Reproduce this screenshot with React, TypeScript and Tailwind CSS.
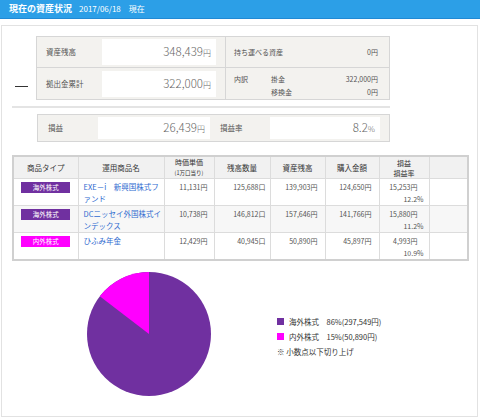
const jp = "font-['Noto_Sans_CJK_JP','Noto_Sans',sans-serif]";

type Row = {
  type: string;
  badge: string;
  name: string;
  price: string;
  qty: string;
  balance: string;
  cost: string;
  profit: string;
  rate: string;
  shade?: boolean;
};

const rows: Row[] = [
  {
    type: "海外株式",
    badge: "bg-[#7030a0]",
    name: "EXE－i　新興国株式ファンド",
    price: "11,131円",
    qty: "125,688口",
    balance: "139,903円",
    cost: "124,650円",
    profit: "15,253円",
    rate: "12.2%",
  },
  {
    type: "海外株式",
    badge: "bg-[#7030a0]",
    name: "DCニッセイ外国株式インデックス",
    price: "10,738円",
    qty: "146,812口",
    balance: "157,646円",
    cost: "141,766円",
    profit: "15,880円",
    rate: "11.2%",
    shade: true,
  },
  {
    type: "内外株式",
    badge: "bg-[#ff00ff]",
    name: "ひふみ年金",
    price: "12,429円",
    qty: "40,945口",
    balance: "50,890円",
    cost: "45,897円",
    profit: "4,993円",
    rate: "10.9%",
  },
];

const Yen = ({ value }: { value: string }) => (
  <span>
    {value}
    <span className="text-[8px]">円</span>
  </span>
);

const PieChart = () => (
  <svg width="124" height="124" viewBox="0 0 124 124">
    <circle cx="62" cy="62" r="62" fill="#7030a0" />
    <path d="M62 62 L62 0 A62 62 0 0 0 12.75 24.34 Z" fill="#ff00ff" />
  </svg>
);

const App = () => {
  return (
    <div className={`h-[419px] w-[480px] overflow-hidden bg-white ${jp}`}>
      <div className="flex h-[19px] items-center gap-[7px] border-b border-[#2189d4] bg-[#2c9fe7] pl-[9px] text-white">
        <span className="text-[9px] font-bold">現在の資産状況</span>
        <span className="text-[8px]">2017/06/18　現在</span>
      </div>

      <div className="ml-[1px] mt-[6px] h-[392px] w-[477px] border border-[#e2e2e2] pl-[10px] pt-[10px]">
        {/* summary */}
        <div className="flex">
          <div className="flex w-[24px] flex-col">
            <div className="h-[50px]" />
            <div className="ml-[3px] h-[1px] w-[13px] bg-[#333]" />
          </div>
          <div className="w-[354px] border border-[#d6d6d6] bg-[#f3f2ef] text-[#555]">
            <div className="flex h-[31px] border-b border-[#d6d6d6]">
              <div className="flex w-[189px] items-center border-r border-[#d6d6d6]">
                <span className="w-[65px] pl-[9px] text-[7.5px]">資産残高</span>
                <div className="flex h-[26px] w-[114px] items-center justify-end bg-white pr-[5px] text-[11.5px] font-light text-[#666]">
                  <Yen value="348,439" />
                </div>
              </div>
              <div className="flex flex-1 items-center justify-between pl-[8px] pr-[11px] text-[7px]">
                <span>持ち運べる資産</span>
                <span>0円</span>
              </div>
            </div>
            <div className="flex h-[31px]">
              <div className="flex w-[189px] items-center border-r border-[#d6d6d6]">
                <span className="w-[65px] pl-[9px] text-[7.5px]">拠出金累計</span>
                <div className="flex h-[26px] w-[114px] items-center justify-end bg-white pr-[5px] text-[11.5px] font-light text-[#666]">
                  <Yen value="322,000" />
                </div>
              </div>
              <div className="flex flex-1 pl-[8px] pr-[11px] pt-[5px] text-[7px] leading-[13px]">
                <span className="w-[37px]">内訳</span>
                <div className="flex flex-1 flex-col">
                  <div className="flex justify-between">
                    <span>掛金</span>
                    <span>322,000円</span>
                  </div>
                  <div className="flex justify-between">
                    <span>移換金</span>
                    <span>0円</span>
                  </div>
                </div>
              </div>
            </div>
          </div>
        </div>

        <div className="mt-[6px] h-[2px] w-[378px] bg-[#e4e4e4]" />

        {/* profit */}
        <div className="ml-[25px] mt-[6px] flex h-[28px] w-[353px] items-center border border-[#d6d6d6] bg-[#f3f2ef] text-[#555]">
          <span className="w-[60px] pl-[10px] text-[7.5px]">損益</span>
          <div className="flex h-[22px] w-[112px] items-center justify-end bg-white pr-[5px] text-[11.5px] font-light text-[#666]">
            <Yen value="26,439" />
          </div>
          <span className="ml-[10px] w-[50px] text-[7.5px]">損益率</span>
          <div className="flex h-[22px] w-[110px] items-center justify-end bg-white pr-[5px] text-[11.5px] font-light text-[#666]">
            <span>
              8.2<span className="text-[8px]">%</span>
            </span>
          </div>
        </div>

        {/* products */}
        <table className="mt-[13px] w-[455px] table-fixed border-collapse border-2 border-[#d0d0d0] text-[7px] text-[#555]">
          <colgroup>
            <col className="w-[65px]" />
            <col className="w-[86px]" />
            <col className="w-[50px]" />
            <col className="w-[56px]" />
            <col className="w-[55px]" />
            <col className="w-[54px]" />
            <col className="w-[50px]" />
            <col className="w-[39px]" />
          </colgroup>
          <thead>
            <tr className="h-[22px] bg-[#f1f1f1] text-[7.5px] text-[#333]">
              <th className="border border-[#dcdcdc] p-0 font-normal">商品タイプ</th>
              <th className="border border-[#dcdcdc] p-0 font-normal">運用商品名</th>
              <th className="border border-[#dcdcdc] p-0 text-[7px] font-normal leading-[10px]">
                時価単価
                <br />
                <span className="text-[5.5px]">(1万口当り)</span>
              </th>
              <th className="border border-[#dcdcdc] p-0 font-normal">残高数量</th>
              <th className="border border-[#dcdcdc] p-0 font-normal">資産残高</th>
              <th className="border border-[#dcdcdc] p-0 font-normal">購入金額</th>
              <th className="border border-[#dcdcdc] p-0 text-[7px] font-normal leading-[10px]">
                損益
                <br />
                損益率
              </th>
              <th className="border border-[#dcdcdc] p-0" />
            </tr>
          </thead>
          <tbody>
            {rows.map((row, i) => (
              <tr
                key={row.name}
                className={`${i === 2 ? "h-[27px]" : "h-[26px]"} ${row.shade ? "bg-[#f7f7f7]" : "bg-white"}`}
              >
                <td className="border border-[#dcdcdc] p-0 pt-[3px] align-top">
                  <div
                    className={`mx-auto flex h-[11px] w-[49px] items-center justify-center text-[6.5px] text-white ${row.badge}`}
                  >
                    {row.type}
                  </div>
                </td>
                <td className="border border-[#dcdcdc] p-0 pl-[5px] pt-[2px] align-top text-[7.5px] leading-[12px] text-[#2f6bd0]">
                  {row.name}
                </td>
                <td className="border border-[#dcdcdc] p-0 pr-[6px] pt-[2px] text-right align-top leading-[12px]">
                  {row.price}
                </td>
                <td className="border border-[#dcdcdc] p-0 pr-[4px] pt-[2px] text-right align-top leading-[12px]">
                  {row.qty}
                </td>
                <td className="border border-[#dcdcdc] p-0 pr-[7px] pt-[2px] text-right align-top leading-[12px]">
                  {row.balance}
                </td>
                <td className="border border-[#dcdcdc] p-0 pr-[7px] pt-[2px] text-right align-top leading-[12px]">
                  {row.cost}
                </td>
                <td className="border border-[#dcdcdc] p-0 pt-[2px] text-right align-top leading-[12px]">
                  <div className="pr-[11px]">{row.profit}</div>
                  <div className="pr-[5px]">{row.rate}</div>
                </td>
                <td className="border border-[#dcdcdc] p-0" />
              </tr>
            ))}
          </tbody>
        </table>

        {/* chart */}
        <div className="mt-[11px] flex items-center">
          <div className="ml-[75px]">
            <PieChart />
          </div>
          <div className="ml-[66px] mt-[4px] flex flex-col gap-[6px] text-[7.5px] leading-[9px] text-[#333]">
            <div className="flex items-center gap-[5px]">
              <span className="h-[7px] w-[7px] bg-[#7030a0]" />
              <span>海外株式　86%(297,549円)</span>
            </div>
            <div className="flex items-center gap-[5px]">
              <span className="h-[7px] w-[7px] bg-[#ff00ff]" />
              <span>内外株式　15%(50,890円)</span>
            </div>
            <div>※ 小数点以下切り上げ</div>
          </div>
        </div>
      </div>
    </div>
  );
};

export default App;
